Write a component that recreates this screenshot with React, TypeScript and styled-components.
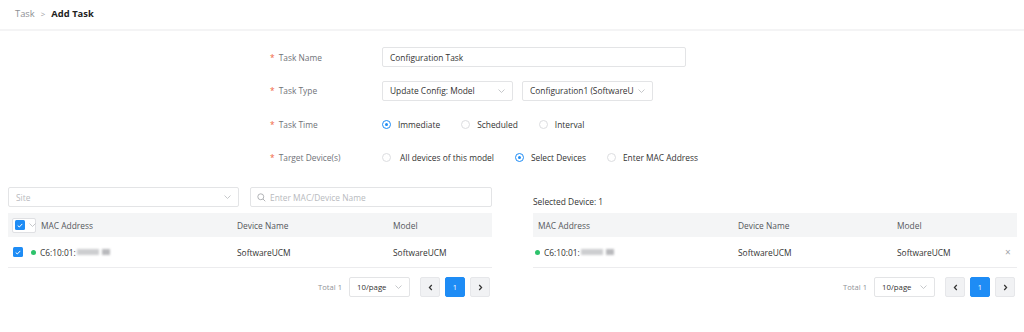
import React from "react";
import styled, { createGlobalStyle } from "styled-components";

const Global = createGlobalStyle`
  html, body { margin: 0; padding: 0; background: #fff; }
  body { font-family: "Open Sans", "Noto Sans", Arial, sans-serif; font-size: 8.4px; color: #333; }
  * { box-sizing: border-box; }
`;

const Page = styled.div`
  width: 1024px;
  height: 332px;
  overflow: hidden;
  background: #fff;
`;

const Header = styled.div`
  height: 31px;
  display: flex;
  align-items: center;
  padding: 0 0 2px 15px;
  border-bottom: 2px solid #f4f4f5;
  font-size: 9.4px;
`;

const Crumb = styled.span`
  color: #8d8f94;
`;
const Sep = styled.span`
  color: #9a9ca1;
  margin: 0 6px;
  font-size: 8px;
`;
const CrumbCurrent = styled.span`
  color: #222;
  font-weight: 700;
`;

const Form = styled.div`
  margin: 16px 0 0 270px;
  display: flex;
  flex-direction: column;
  gap: 13.5px;
`;

const FormRow = styled.div`
  display: flex;
  align-items: center;
  height: 20px;
`;

const Label = styled.div`
  width: 112px;
  color: #707278;
  &::before {
    content: "*";
    color: #f0643c;
    margin-right: 4px;
  }
`;

const TextInput = styled.div`
  width: 304px;
  height: 20px;
  border: 1px solid #e3e4e6;
  border-radius: 2px;
  display: flex;
  align-items: center;
  padding: 0 7px;
  color: #333;
`;

const Select = styled.div<{ $w: number; $muted?: boolean }>`
  width: ${(p) => p.$w}px;
  height: 20px;
  border: 1px solid #e3e4e6;
  border-radius: 2px;
  display: flex;
  align-items: center;
  justify-content: space-between;
  padding: 0 7px 0 7px;
  color: ${(p) => (p.$muted ? "#b8babe" : "#333")};
  white-space: nowrap;
  overflow: hidden;
  flex-shrink: 0;
`;

const SelectText = styled.span`
  overflow: hidden;
  white-space: nowrap;
  flex: 1;
`;

const Chevron = () => (
  <svg width="7" height="4" viewBox="0 0 7 4" style={{ flexShrink: 0, marginLeft: 4 }}>
    <path d="M0.5 0.5 L3.5 3.5 L6.5 0.5" fill="none" stroke="#b8babe" strokeWidth="0.8" />
  </svg>
);

const Gap = styled.div<{ $w: number }>`
  width: ${(p) => p.$w}px;
  flex-shrink: 0;
`;

const RadioGroup = styled.div`
  display: flex;
  align-items: center;
`;

const RadioItem = styled.div<{ $gap: number }>`
  display: flex;
  align-items: center;
  margin-right: ${(p) => p.$gap}px;
  color: #333;
`;

const RadioCircle = styled.span<{ $on?: boolean; $space?: number }>`
  width: 9px;
  height: 9px;
  border-radius: 50%;
  border: 1px solid ${(p) => (p.$on ? "#1e8cf5" : "#dcdde0")};
  display: inline-flex;
  align-items: center;
  justify-content: center;
  margin-right: ${(p) => p.$space ?? 7}px;
  flex-shrink: 0;
  &::after {
    content: "";
    width: 3px;
    height: 3px;
    border-radius: 50%;
    background: ${(p) => (p.$on ? "#1e8cf5" : "transparent")};
  }
`;

const Bottom = styled.div`
  margin-top: 19.5px;
  display: flex;
  padding-left: 8px;
  gap: 41px;
`;

const Panel = styled.div<{ $w: number }>`
  width: ${(p) => p.$w}px;
  display: flex;
  flex-direction: column;
`;

const Filters = styled.div`
  display: flex;
  gap: 11px;
  height: 20px;
  margin-bottom: 6px;
`;

const SearchBox = styled.div`
  flex: 1;
  height: 20px;
  border: 1px solid #e3e4e6;
  border-radius: 2px;
  display: flex;
  align-items: center;
  padding: 0 6px;
  color: #b8babe;
  gap: 4px;
`;

const Caption = styled.div`
  height: 26px;
  display: flex;
  align-items: center;
  padding-top: 3px;
  color: #333;
`;

const Table = styled.div`
  display: flex;
  flex-direction: column;
  border-bottom: 1px solid #ececee;
`;

const THead = styled.div<{ $cols: string }>`
  display: grid;
  grid-template-columns: ${(p) => p.$cols};
  height: 24px;
  background: #f4f5f6;
  align-items: center;
  color: #55575c;
`;

const TRow = styled.div<{ $cols: string }>`
  display: grid;
  grid-template-columns: ${(p) => p.$cols};
  height: 30px;
  align-items: center;
  color: #333;
`;

const Cell = styled.div<{ $pl?: number }>`
  padding-left: ${(p) => (p.$pl ?? 8)}px;
  display: flex;
  align-items: center;
  white-space: nowrap;
`;

const CheckBox = styled.span`
  width: 10px;
  height: 10px;
  border-radius: 1.5px;
  background: #1e8cf5;
  display: inline-flex;
  align-items: center;
  justify-content: center;
  flex-shrink: 0;
`;

const Check = () => (
  <CheckBox>
    <svg width="6" height="5" viewBox="0 0 6 5">
      <path d="M0.7 2.5 L2.3 4 L5.3 0.9" fill="none" stroke="#fff" strokeWidth="1" />
    </svg>
  </CheckBox>
);

const HeadCheckWrap = styled.span`
  width: 24px;
  height: 15px;
  border: 1px solid #dfe0e3;
  border-radius: 2px;
  background: #fff;
  display: inline-flex;
  align-items: center;
  padding-left: 2px;
  margin-right: 5px;
`;

const Dot = styled.span`
  width: 5px;
  height: 5px;
  border-radius: 50%;
  background: #2dc26b;
  margin-right: 4px;
  flex-shrink: 0;
`;

const Blur = styled.span`
  display: inline-flex;
  align-items: center;
  gap: 3px;
  margin-left: 1px;
  filter: blur(1px);
`;

const BlurBit = styled.span<{ $w: number; $c: string }>`
  width: ${(p) => p.$w}px;
  height: 6px;
  background: ${(p) => p.$c};
`;

const MacBlur = () => (
  <Blur>
    <BlurBit $w={22} $c="#cdced0" />
    <BlurBit $w={8} $c="#b9babd" />
  </Blur>
);

const Close = styled.span`
  color: #a3a5a9;
  font-size: 10px;
  padding-left: 4px;
`;

const Pager = styled.div`
  display: flex;
  justify-content: flex-end;
  align-items: center;
  margin-top: 9px;
  height: 20px;
  padding-right: 2px;
  font-size: 7.8px;
`;

const Total = styled.span`
  color: #909297;
  font-size: 7.6px;
  margin-right: 7px;
`;

const PageBtn = styled.div<{ $active?: boolean }>`
  width: 20px;
  height: 20px;
  border-radius: 2px;
  display: flex;
  align-items: center;
  justify-content: center;
  background: ${(p) => (p.$active ? "#1e8cf5" : "#f1f2f4")};
  border: 1px solid ${(p) => (p.$active ? "#1e8cf5" : "#e6e7ea")};
  color: ${(p) => (p.$active ? "#fff" : "#333")};
  font-size: 7.5px;
  margin-left: 5px;
`;

const Arrow = ({ dir }: { dir: "l" | "r" }) => (
  <svg width="5" height="7" viewBox="0 0 5 7">
    <path
      d={dir === "l" ? "M3.8 1 L1.4 3.5 L3.8 6" : "M1.2 1 L3.6 3.5 L1.2 6"}
      fill="none"
      stroke="#333"
      strokeWidth="1.2"
    />
  </svg>
);

const Pagination = () => (
  <Pager>
    <Total>Total 1</Total>
    <Select $w={61}>
      <SelectText>10/page</SelectText>
      <Chevron />
    </Select>
    <Gap $w={5} />
    <PageBtn>
      <Arrow dir="l" />
    </PageBtn>
    <PageBtn $active>1</PageBtn>
    <PageBtn>
      <Arrow dir="r" />
    </PageBtn>
  </Pager>
);

const SearchIcon = () => (
  <svg width="9" height="9" viewBox="0 0 10 10">
    <circle cx="4.2" cy="4.2" r="3.3" fill="none" stroke="#a9abaf" strokeWidth="1" />
    <path d="M6.7 6.7 L9.2 9.2" stroke="#a9abaf" strokeWidth="1" />
  </svg>
);

const leftCols = "221px 156px 1fr";
const rightCols = "197px 159px 1fr 16px";

export default function App() {
  return (
    <Page>
      <Global />
      <Header>
        <Crumb>Task</Crumb>
        <Sep>&gt;</Sep>
        <CrumbCurrent>Add Task</CrumbCurrent>
      </Header>

      <Form>
        <FormRow>
          <Label>Task Name</Label>
          <TextInput>Configuration Task</TextInput>
        </FormRow>
        <FormRow>
          <Label>Task Type</Label>
          <Select $w={131}>
            <SelectText>Update Config: Model</SelectText>
            <Chevron />
          </Select>
          <Gap $w={9} />
          <Select $w={131}>
            <SelectText>Configuration1 (SoftwareUCM)</SelectText>
            <Chevron />
          </Select>
        </FormRow>
        <FormRow>
          <Label>Task Time</Label>
          <RadioGroup>
            <RadioItem $gap={21}>
              <RadioCircle $on />
              Immediate
            </RadioItem>
            <RadioItem $gap={21}>
              <RadioCircle />
              Scheduled
            </RadioItem>
            <RadioItem $gap={0}>
              <RadioCircle />
              Interval
            </RadioItem>
          </RadioGroup>
        </FormRow>
        <FormRow>
          <Label>Target Device(s)</Label>
          <RadioGroup>
            <RadioItem $gap={21}>
              <RadioCircle $space={9} />
              All devices of this model
            </RadioItem>
            <RadioItem $gap={21}>
              <RadioCircle $on />
              Select Devices
            </RadioItem>
            <RadioItem $gap={0}>
              <RadioCircle />
              Enter MAC Address
            </RadioItem>
          </RadioGroup>
        </FormRow>
      </Form>

      <Bottom>
        <Panel $w={484}>
          <Filters>
            <Select $w={231} $muted>
              <SelectText>Site</SelectText>
              <Chevron />
            </Select>
            <SearchBox>
              <SearchIcon />
              Enter MAC/Device Name
            </SearchBox>
          </Filters>
          <Table>
            <THead $cols={leftCols}>
              <Cell $pl={4}>
                <HeadCheckWrap>
                  <Check />
                  <Chevron />
                </HeadCheckWrap>
                MAC Address
              </Cell>
              <Cell>Device Name</Cell>
              <Cell>Model</Cell>
            </THead>
            <TRow $cols={leftCols}>
              <Cell $pl={5}>
                <Check />
                <Gap $w={8} />
                <Dot />
                C6:10:01:
                <MacBlur />
              </Cell>
              <Cell>SoftwareUCM</Cell>
              <Cell>SoftwareUCM</Cell>
            </TRow>
          </Table>
          <Pagination />
        </Panel>

        <Panel $w={484}>
          <Caption>Selected Device: 1</Caption>
          <Table>
            <THead $cols={rightCols}>
              <Cell $pl={5}>MAC Address</Cell>
              <Cell>Device Name</Cell>
              <Cell>Model</Cell>
              <Cell />
            </THead>
            <TRow $cols={rightCols}>
              <Cell $pl={2}>
                <Dot />
                C6:10:01:
                <MacBlur />
              </Cell>
              <Cell>SoftwareUCM</Cell>
              <Cell>SoftwareUCM</Cell>
              <Close>×</Close>
            </TRow>
          </Table>
          <Pagination />
        </Panel>
      </Bottom>
    </Page>
  );
}
